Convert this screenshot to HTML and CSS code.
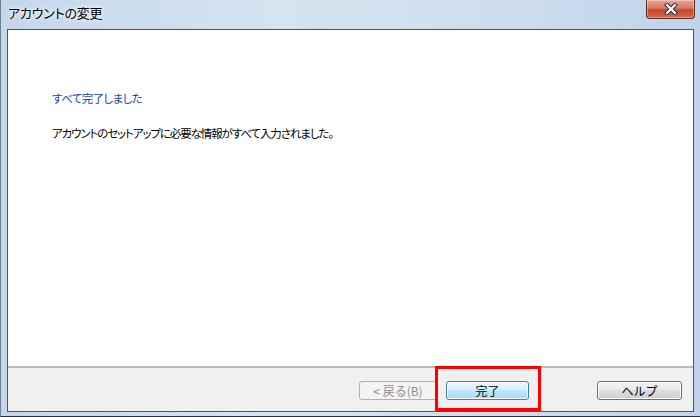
FILE: index.html
```html
<!DOCTYPE html>
<html lang="ja">
<head>
<meta charset="utf-8">
<link rel="stylesheet" href="styles.css">
</head>
<body>
<div class="window">
  <div class="titlebar">
    <span class="title">アカウントの変更</span>
    <div class="close"><svg width="18" height="12" viewBox="0 0 18 12"><path d="M5 2 L13 10 M13 2 L5 10" stroke="#20304a" stroke-width="4.2" stroke-linecap="square"/><path d="M5 2 L13 10 M13 2 L5 10" stroke="#ffffff" stroke-width="2.2" stroke-linecap="square"/></svg></div>
  </div>
  <div class="client">
    <div class="content">
      <div class="heading">すべて完了しました</div>
      <div class="message">アカウントのセットアップに必要な情報がすべて入力されました。</div>
    </div>
    <div class="footer">
      <button class="btn disabled">&lt; 戻る(B)</button>
      <div class="highlight-wrap">
        <button class="btn primary">完了</button>
        <div class="highlight"></div>
      </div>
      <button class="btn help">ヘルプ</button>
    </div>
  </div>
</div>
</body>
</html>
```
FILE: styles.css
```css
html, body {
  margin: 0;
  padding: 0;
  width: 700px;
  height: 417px;
  overflow: hidden;
}
body {
  font-family: "Noto Sans CJK JP", "Noto Sans", sans-serif;
  font-feature-settings: "palt";
}
.window {
  width: 700px;
  height: 417px;
  box-sizing: border-box;
  display: flex;
  flex-direction: column;
  background: linear-gradient(90deg, #c4d7ea 0%, #d6e4f1 40%, #cfdeed 70%, #bfd4ea 100%);
  border-left: 1px solid #6f7f92;
  border-bottom: 1px solid #2a2f38;
  padding: 0 6px 4px 6px;
}
.titlebar {
  height: 29px;
  display: flex;
  align-items: flex-start;
  justify-content: space-between;
  flex: none;
}
.title {
  font-size: 13px;
  color: #000;
  margin-top: 3px;
  margin-left: 1px;
  letter-spacing: -0.2px;
  text-shadow: 0 0 6px #fff, 0 0 3px #fff;
}
.close {
  width: 47px;
  height: 18px;
  margin-right: -1px;
  border: 1px solid #5a2d24;
  border-top: none;
  border-radius: 0 0 4px 4px;
  background: linear-gradient(180deg, #e8a593 0%, #d77a63 45%, #c4462a 55%, #d5684d 100%);
  display: flex;
  align-items: center;
  justify-content: center;
  box-shadow: inset 0 0 0 1px rgba(255,255,255,0.35);
}
.client {
  flex: 1;
  display: flex;
  flex-direction: column;
  border: 1px solid #4c5460;
  background: #fff;
}
.content {
  flex: 1;
  padding: 60px 0 0 44px;
  border-bottom: 2px solid #b9b9b9;
}
.heading {
  color: #1540b8;
  font-size: 11.5px;
  letter-spacing: -0.6px;
  line-height: 16px;
}
.message {
  color: #000;
  font-size: 11.5px;
  letter-spacing: -1.1px;
  line-height: 16px;
  margin-top: 19px;
}
.footer {
  height: 43px;
  flex: none;
  background: #f0f0f0;
  display: flex;
  align-items: center;
  padding-left: 351px;
  padding-top: 1px;
  box-sizing: border-box;
}
.btn {
  font-family: inherit;
  font-size: 12px;
  height: 19px;
  padding: 0;
  border-radius: 3px;
  box-sizing: border-box;
  line-height: 15px;
}
.disabled {
  width: 78px;
  color: #8d8d8d;
  border: 1px solid #adb2b5;
  background: #f4f4f4;
}
.highlight-wrap {
  position: relative;
  margin-left: 9px;
}
.primary {
  width: 83px;
  color: #000;
  border: 1px solid #3c7fb1;
  background: linear-gradient(180deg, #eaf6fd 0%, #d9f0fc 45%, #bee6fd 50%, #a7d9f5 100%);
  box-shadow: inset 0 0 0 1px #fff;
  display: block;
}
.highlight {
  position: absolute;
  left: -11px;
  top: -15px;
  width: 106px;
  height: 45px;
  box-sizing: border-box;
  border: 3px solid #ff0000;
}
.help {
  margin-left: 68px;
  width: 85px;
  color: #000;
  border: 1px solid #707070;
  background: linear-gradient(180deg, #f2f2f2 0%, #ebebeb 45%, #dddddd 50%, #cfcfcf 100%);
  box-shadow: inset 0 0 0 1px #fcfcfc;
}
```
